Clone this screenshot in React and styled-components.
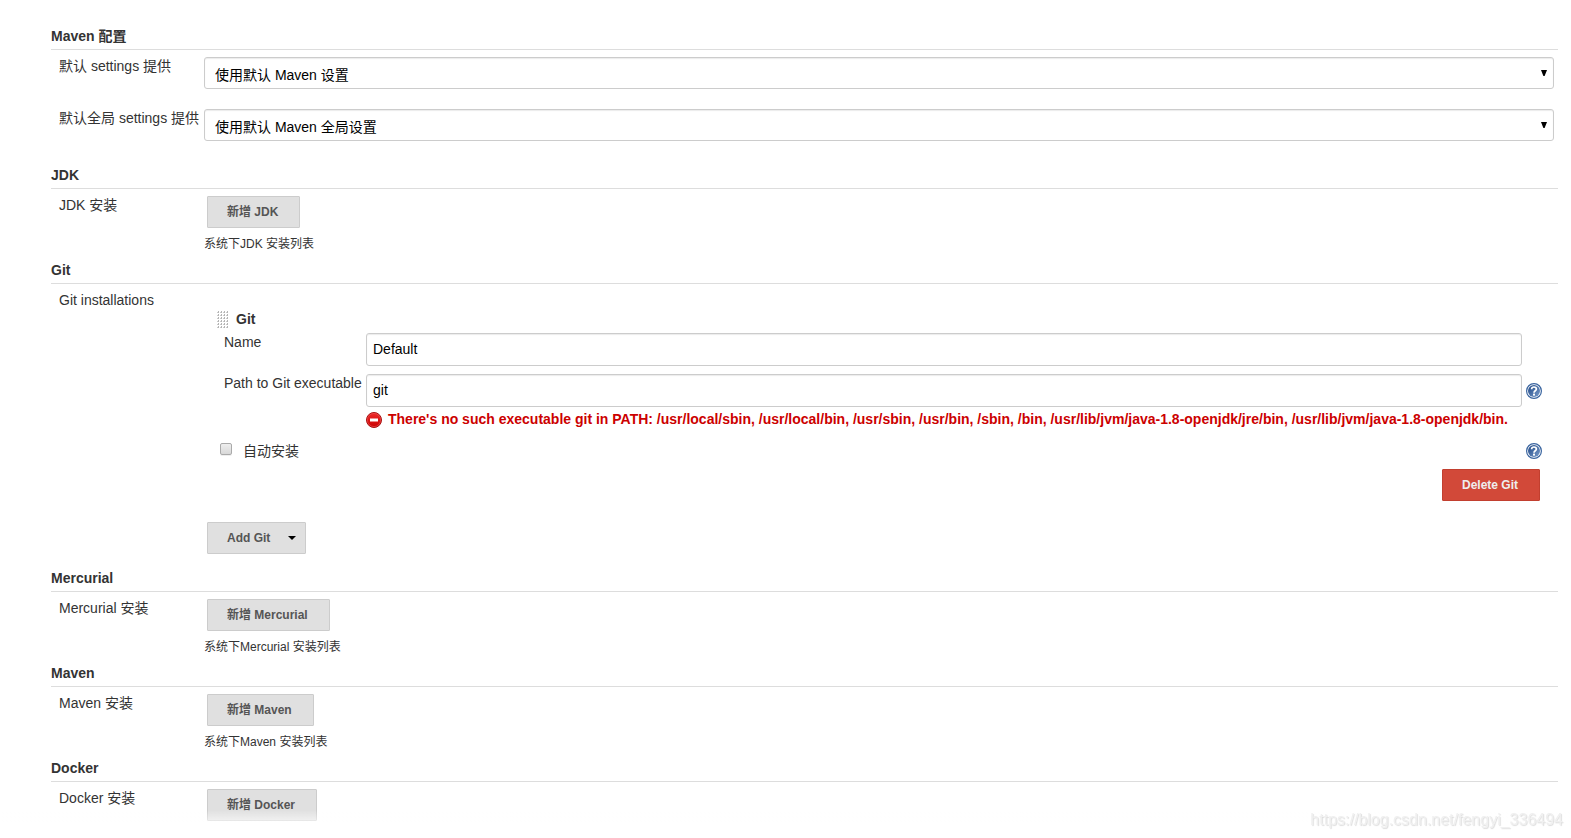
import React from 'react'
import styled, { createGlobalStyle } from 'styled-components'

const GlobalStyle = createGlobalStyle`
  * {
    box-sizing: border-box;
  }

  body {
    margin: 0;
    background: #fff;
    color: #333;
    font-family: 'Liberation Sans', 'Noto Sans CJK SC', sans-serif;
    font-size: 14px;
    line-height: 18px;
  }

  button, input, select {
    font-family: inherit;
    margin: 0;
  }
`

const Page = styled.form`
  padding: 26px 13px 0 51px;
`

const Section = styled.section`
  padding-bottom: ${({ $gap }) => $gap}px;
`

const SectionTitle = styled.h2`
  margin: 0;
  padding-bottom: 3px;
  border-bottom: 1px solid #ddd;
  font-size: 14px;
  font-weight: bold;
  line-height: 20px;
`

const Rows = styled.div`
  display: flex;
  flex-direction: column;
  gap: 20px;
  padding: 7px 4px 0 8px;
`

const Row = styled.div`
  display: grid;
  grid-template-columns: 145px 1fr;
`

const Label = styled.label`
  white-space: nowrap;
`

const SelectWrap = styled.div`
  position: relative;
  height: 32px;
`

const Select = styled.select`
  appearance: none;
  display: block;
  width: 100%;
  height: 32px;
  padding: 4px 20px 0 10px;
  border: 1px solid #ccc;
  border-radius: 3px;
  background: #fff;
  box-shadow: inset 0 1px 1px rgba(0, 0, 0, 0.08);
  color: #000;
  font-size: 14px;
`

const SelectArrow = styled.svg`
  position: absolute;
  right: 7px;
  top: 13px;
  pointer-events: none;
`

const TextInput = styled.input`
  width: 100%;
  height: 33px;
  padding: 0 6px 2px;
  border: 1px solid #ccc;
  border-radius: 3px;
  box-shadow: inset 0 1px 1px rgba(0, 0, 0, 0.08);
  color: #000;
  font-size: 14px;
`

const Button = styled.button`
  display: inline-flex;
  align-items: center;
  gap: 18px;
  height: 32px;
  padding: 0 ${({ $menu }) => ($menu ? '9px' : '21px')} 0 19px;
  border: 1px solid ${({ $danger }) => ($danger ? '#c23f2f' : '#ccc')};
  border-radius: 1px;
  background: ${({ $danger }) => ($danger ? '#d24939' : '#e0e0e0')};
  color: ${({ $danger }) => ($danger ? '#eee' : '#555')};
  font-size: 12px;
  font-weight: bold;
  line-height: 14px;
`

const ButtonLine = styled.div`
  display: flex;
  padding-left: 3px;
`

const Description = styled.div`
  padding-top: 8px;
  font-size: 12px;
  line-height: 16px;
`

const Chunk = styled.div`
  padding: 19px 12px 21px 13px;
`

const ChunkTitle = styled.div`
  display: flex;
  align-items: center;
  gap: 7px;
  padding-bottom: 5px;
  font-weight: bold;
`

const Field = styled.div`
  display: grid;
  grid-template-columns: 142px 1fr 20px;
  padding: 0 0 8px 7px;
`

const HelpLink = styled.a`
  display: block;
  width: 16px;
  height: 16px;
  align-self: center;
  justify-self: end;
`

const ErrorLine = styled.div`
  grid-column: 2;
  display: flex;
  align-items: flex-end;
  gap: 6px;
  height: 21px;
  color: #c00;
  font-weight: bold;
  white-space: nowrap;
`

const CheckLine = styled.div`
  display: flex;
  align-items: center;
  justify-content: space-between;
  padding: 6px 0 9px 3px;
`

const CheckLabel = styled.label`
  display: flex;
  gap: 11px;
`

const Checkbox = styled.input`
  appearance: none;
  width: 12px;
  height: 12px;
  border: 1px solid #aaa;
  border-radius: 2px;
  background: linear-gradient(#eee, #d8d8d8);
  box-shadow: 0 1px 0 #eee;

  && {
    margin: 1px 0 0;
  }
`

const DeleteLine = styled.div`
  display: flex;
  justify-content: flex-end;
  padding-right: 2px;
`

const BottomFade = styled.div`
  position: fixed;
  left: 0;
  right: 0;
  bottom: 16px;
  height: 12px;
  background: linear-gradient(rgba(255, 255, 255, 0), rgba(255, 255, 255, 0.6));
  pointer-events: none;
`

const Watermark = styled.div`
  position: fixed;
  right: 8px;
  bottom: 8px;
  color: #f0f0f0;
  font-size: 16px;
  line-height: 20px;
  text-shadow: 1px 1px 1px #ddd;
`

const HelpIcon = () => (
  <svg width="16" height="16" viewBox="0 0 16 16" aria-hidden="true">
    <defs>
      <linearGradient id="helpFill" x1="0" y1="0" x2="1" y2="1">
        <stop offset="0" stopColor="#1d4684" />
        <stop offset="1" stopColor="#7a9ccb" />
      </linearGradient>
    </defs>
    <circle cx="8" cy="8" r="7.4" fill="#fff" stroke="#39649f" strokeWidth="1.2" />
    <circle cx="8" cy="8" r="6" fill="url(#helpFill)" />
    <path
      d="M5.6 6.2C5.6 3.3 10.4 3.3 10.4 6.1C10.4 7.9 8 7.7 8 9.8"
      fill="none"
      stroke="#fff"
      strokeWidth="1.7"
    />
    <rect x="7" y="10.6" width="2" height="2" fill="#fff" />
  </svg>
)

const ErrorIcon = () => (
  <svg width="16" height="16" viewBox="0 0 16 16" aria-hidden="true">
    <defs>
      <linearGradient id="errorFill" x1="0" y1="0" x2="0" y2="1">
        <stop offset="0" stopColor="#ee2b2b" />
        <stop offset="1" stopColor="#c90000" />
      </linearGradient>
    </defs>
    <circle cx="8" cy="8" r="7.5" fill="url(#errorFill)" stroke="#a61212" />
    <circle cx="8" cy="8" r="6.6" fill="none" stroke="#ec5555" strokeWidth="0.6" />
    <rect x="4" y="6.5" width="8" height="3" fill="#fff" />
  </svg>
)

const DragHandle = () => (
  <svg width="12" height="18" viewBox="0 0 12 18" aria-hidden="true">
    {[2, 5, 8, 11, 14, 17].map((y) =>
      [0, 3, 6, 9].map((x) => (
        <React.Fragment key={`${x}-${y}`}>
          <rect x={x} y={y} width="2" height="1" fill="#ccc" />
          <rect x={x + 1} y={y - 1} width="1" height="2" fill="#b4b4b4" />
        </React.Fragment>
      ))
    )}
  </svg>
)

const Help = ({ topic }) => (
  <HelpLink href="#help" aria-label={`Help for ${topic}`}>
    <HelpIcon />
  </HelpLink>
)

const SelectRow = ({ id, label, value }) => (
  <Row>
    <Label htmlFor={id}>{label}</Label>
    <SelectWrap>
      <Select id={id}>
        <option>{value}</option>
      </Select>
      <SelectArrow width="6" height="6" viewBox="0 0 6 6">
        <path d="M0 0H6L3.6 6H2.4Z" fill="#000" />
      </SelectArrow>
    </SelectWrap>
  </Row>
)

const ToolSection = ({ name, described = true }) => (
  <Section $gap={8}>
    <SectionTitle>{name}</SectionTitle>
    <Rows>
      <Row>
        <div>{name} 安装</div>
        <div>
          <ButtonLine>
            <Button type="button">新增 {name}</Button>
          </ButtonLine>
          {described && <Description>系统下{name} 安装列表</Description>}
        </div>
      </Row>
    </Rows>
  </Section>
)

const GitSection = () => (
  <Section $gap={14}>
    <SectionTitle>Git</SectionTitle>
    <Rows>
      <Row>
        <div>Git installations</div>
        <div>
          <Chunk>
            <ChunkTitle>
              <DragHandle />
              Git
            </ChunkTitle>
            <Field>
              <Label htmlFor="git-name">Name</Label>
              <TextInput id="git-name" type="text" defaultValue="Default" />
            </Field>
            <Field>
              <Label htmlFor="git-path">Path to Git executable</Label>
              <TextInput id="git-path" type="text" defaultValue="git" />
              <Help topic="Path to Git executable" />
              <ErrorLine>
                <ErrorIcon />
                There's no such executable git in PATH: /usr/local/sbin, /usr/local/bin, /usr/sbin,
                /usr/bin, /sbin, /bin, /usr/lib/jvm/java-1.8-openjdk/jre/bin,
                /usr/lib/jvm/java-1.8-openjdk/bin.
              </ErrorLine>
            </Field>
            <CheckLine>
              <CheckLabel>
                <Checkbox type="checkbox" />
                自动安装
              </CheckLabel>
              <Help topic="自动安装" />
            </CheckLine>
            <DeleteLine>
              <Button type="button" $danger>Delete Git</Button>
            </DeleteLine>
          </Chunk>
          <ButtonLine>
            <Button type="button" $menu>
              Add Git
              <svg width="8" height="4" viewBox="0 0 8 4" aria-hidden="true">
                <path d="M0 0H8L4 4Z" fill="#000" />
              </svg>
            </Button>
          </ButtonLine>
        </div>
      </Row>
    </Rows>
  </Section>
)

const App = () => {
  return (
    <>
      <GlobalStyle />
      <Page>
        <Section $gap={24}>
          <SectionTitle>Maven 配置</SectionTitle>
          <Rows>
            <SelectRow id="settings" label="默认 settings 提供" value="使用默认 Maven 设置" />
            <SelectRow
              id="global-settings"
              label="默认全局 settings 提供"
              value="使用默认 Maven 全局设置"
            />
          </Rows>
        </Section>
        <ToolSection name="JDK" />
        <GitSection />
        <ToolSection name="Mercurial" />
        <ToolSection name="Maven" />
        <ToolSection name="Docker" described={false} />
      </Page>
      <BottomFade />
      <Watermark>https://blog.csdn.net/fengyi_336494</Watermark>
    </>
  )
}

export default App
